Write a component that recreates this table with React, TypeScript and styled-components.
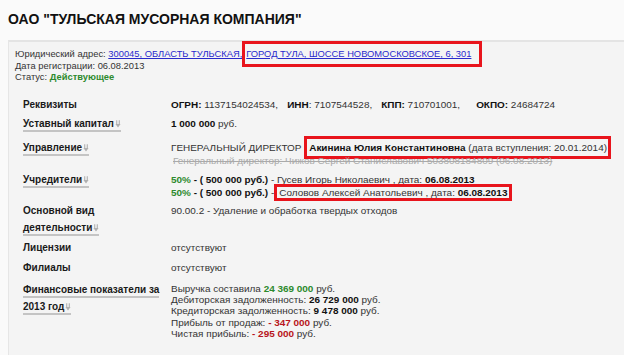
import React from 'react';
import styled, { createGlobalStyle } from 'styled-components';

const Global = createGlobalStyle`
  html, body {
    margin: 0;
    padding: 0;
    background: #fff;
  }
  body {
    font-family: "Liberation Sans", Arial, sans-serif;
    color: #222;
  }
`;

const Page = styled.div`
  width: 624px;
  height: 355px;
  background: #fafafa;
  overflow: hidden;
`;

const Title = styled.h1`
  margin: 0;
  padding: 10px 0 0 8px;
  height: 40px;
  box-sizing: border-box;
  font-size: 14px;
  line-height: 18px;
  font-weight: bold;
  color: #111;
`;

const Card = styled.div`
  margin-left: 8px;
  background: #f4f4f4;
  border-top: 2px solid #e4e4e4;
  border-left: 1px solid #e6e6e6;
  padding: 7px 0 0 6px;
  height: 330px;
`;

const Info = styled.div`
  font-size: 9.35px;
  line-height: 11.6px;
  color: #333;
`;

const AddrLink = styled.a`
  color: #2a2acc;
  text-decoration: underline;
`;

const Marked = styled.span<{ $pad?: string }>`
  border: 3px solid #e8141c;
  padding: ${p => p.$pad || '1px 2px'};
`;

const Active = styled.span`
  color: #2d8a2d;
  font-weight: bold;
`;

const Rows = styled.div`
  margin-top: 12px;
  padding-left: 8px;
`;

const Row = styled.div<{ $top: number }>`
  display: grid;
  grid-template-columns: 148px 1fr;
  margin-top: ${p => p.$top}px;
  align-items: start;
`;

const Label = styled.div`
  font-size: 10px;
  font-weight: bold;
  line-height: 17px;
  color: #1a1a1a;
`;

const Dotted = styled.span`
  border-bottom: 2px solid #c4c4c4;
  padding-bottom: 1px;
`;

const Value = styled.div<{ $lh?: number }>`
  font-size: 9.95px;
  line-height: ${p => p.$lh || 13}px;
  padding-top: 2px;
  color: #333;
  white-space: nowrap;
`;

const B = styled.b`
  color: #111;
`;

const Green = styled.b`
  color: #2d8a2d;
`;

const Red = styled.b`
  color: #b81420;
`;

const Struck = styled.div`
  color: #aaa;
  text-decoration: line-through;
  margin-left: 2px;
`;

const Sep = styled.span<{ $w: number }>`
  display: inline-block;
  width: ${p => p.$w}px;
`;

function Arrow() {
  return (
    <svg width="6" height="8" viewBox="0 0 7 9" style={{ marginLeft: 1, verticalAlign: -1 }}>
      <path d="M2 0v5M5 0v5" stroke="#b0b0b0" strokeWidth="1.3" />
      <path d="M0.5 4.5h6l-3 4z" fill="#b0b0b0" />
    </svg>
  );
}

export default function App() {
  return (
    <Page>
      <Global />
      <Title>ОАО "ТУЛЬСКАЯ МУСОРНАЯ КОМПАНИЯ"</Title>
      <Card>
        <Info>
          <div>
            Юридический адрес: <AddrLink>300045, ОБЛАСТЬ ТУЛЬСКАЯ,</AddrLink>
            <Marked $pad="5px 8px 5px 1px">
              <AddrLink>ГОРОД ТУЛА, ШОССЕ НОВОМОСКОВСКОЕ, 6, 301</AddrLink>
            </Marked>
          </div>
          <div>Дата регистрации: 06.08.2013</div>
          <div>
            Статус: <Active>Действующее</Active>
          </div>
        </Info>
        <Rows>
          <Row $top={0}>
            <Label>Реквизиты</Label>
            <Value>
              <B>ОГРН:</B> 1137154024534,<Sep $w={9} />
              <B>ИНН</B>: 7107544528,<Sep $w={9} />
              <B>КПП:</B> 710701001,<Sep $w={16} />
              <B>ОКПО:</B> 24684724
            </Value>
          </Row>
          <Row $top={2}>
            <Label>
              <Dotted>
                Уставный капитал<Arrow />
              </Dotted>
            </Label>
            <Value>
              <B>1 000 000</B> руб.
            </Value>
          </Row>
          <Row $top={7}>
            <Label>
              <Dotted>
                Управление<Arrow />
              </Dotted>
            </Label>
            <Value>
              <div>
                ГЕНЕРАЛЬНЫЙ ДИРЕКТОР{' '}
                <Marked $pad="3px 1px 3px 2px">
                  <B>Акинина Юлия Константиновна</B> (дата вступления: 20.01.2014)
                </Marked>
              </div>
              <Struck>Генеральный директор: Чижов Сергей Станиславович 503808184809 (06.08.2013)</Struck>
            </Value>
          </Row>
          <Row $top={4}>
            <Label>
              <Dotted>
                Учредители<Arrow />
              </Dotted>
            </Label>
            <Value>
              <div>
                <Green>50%</Green> <B>- ( 500 000 руб.)</B> - Гусев Игорь Николаевич , дата: <B>06.08.2013</B>
              </div>
              <div>
                <Green>50%</Green> <B>- ( 500 000 руб.)</B> -
                <Marked $pad="0 2px">
                  Соловов Алексей Анатольевич , дата: <B>06.08.2013</B>
                </Marked>
              </div>
            </Value>
          </Row>
          <Row $top={3}>
            <Label>
              Основной вид
              <br />
              <Dotted>
                деятельности<Arrow />
              </Dotted>
            </Label>
            <Value>90.00.2 - Удаление и обработка твердых отходов</Value>
          </Row>
          <Row $top={3}>
            <Label>Лицензии</Label>
            <Value>отсутствуют</Value>
          </Row>
          <Row $top={3}>
            <Label>Филиалы</Label>
            <Value>отсутствуют</Value>
          </Row>
          <Row $top={5}>
            <Label>
              <Dotted>Финансовые показатели за</Dotted>
              <br />
              <Dotted>
                2013 год<Arrow />
              </Dotted>
            </Label>
            <Value $lh={11.3}>
              <div>
                Выручка составила <Green>24 369 000</Green> руб.
              </div>
              <div>
                Дебиторская задолженность: <B>26 729 000</B> руб.
              </div>
              <div>
                Кредиторская задолженность: <B>9 478 000</B> руб.
              </div>
              <div>
                Прибыль от продаж: <Red>- 347 000</Red> руб.
              </div>
              <div>
                Чистая прибыль: <Red>- 295 000</Red> руб.
              </div>
            </Value>
          </Row>
        </Rows>
      </Card>
    </Page>
  );
}
